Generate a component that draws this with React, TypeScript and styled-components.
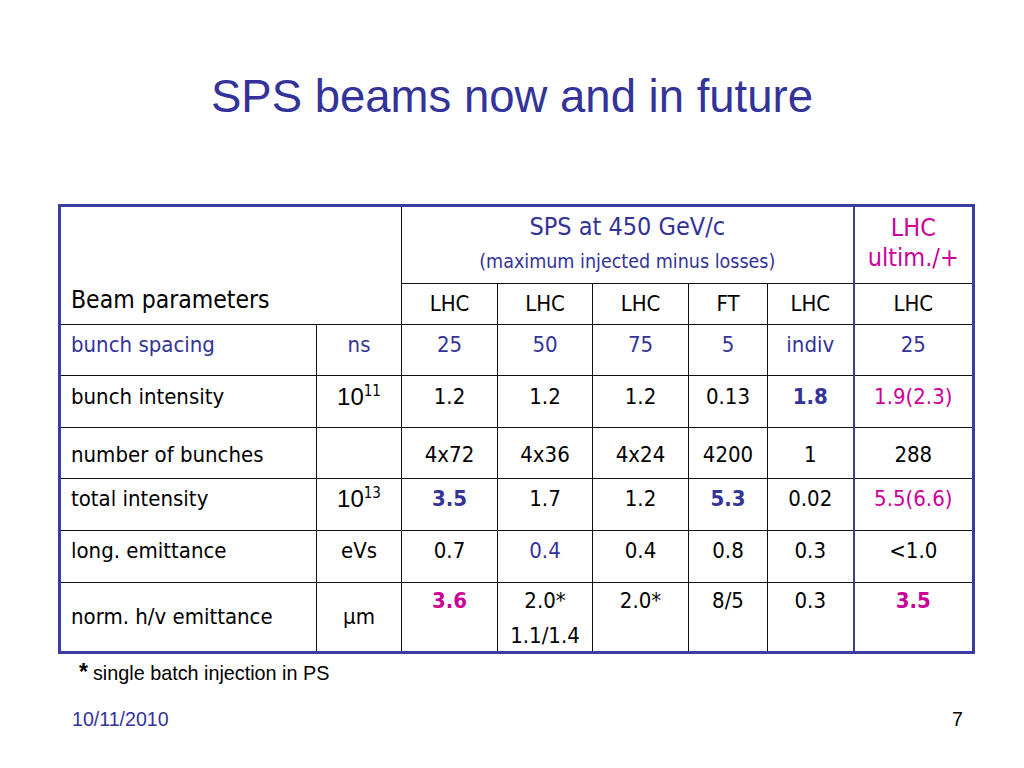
import React from "react";
import styled, { createGlobalStyle } from "styled-components";

const BLUE = "#333399";
const MAGENTA = "#cc0099";
const CELL_FONT = `"DejaVu Sans Condensed", "DejaVu Sans", sans-serif`;
const ARIAL = `"Liberation Sans", Arial, sans-serif`;

const Global = createGlobalStyle`
  html, body { margin: 0; padding: 0; background: #fff; }
  #root { width: 1024px; height: 768px; }
`;

const Slide = styled.div`
  width: 1024px;
  height: 768px;
  display: flex;
  flex-direction: column;
  box-sizing: border-box;
  overflow: hidden;
`;

const Title = styled.h1`
  margin: 0;
  height: 194px;
  padding-top: 71px;
  box-sizing: border-box;
  text-align: center;
  font-family: ${ARIAL};
  font-weight: normal;
  font-size: 45.5px;
  line-height: 52px;
  color: ${BLUE};
`;

const TableWrap = styled.div`
  padding: 0 0 0 58px;
  margin-top: 10px;
`;

const Table = styled.table`
  border-collapse: collapse;
  table-layout: fixed;
  width: 915px;
  border: 3px solid #3b3ba0;
  font-family: ${CELL_FONT};
  font-size: 22px;
  color: #000;
`;

const Row = styled.tr<{ $h: number }>`
  height: ${(p) => p.$h}px;
`;

const Cell = styled.td<{
  $align?: "left" | "center";
  $valign?: "top" | "middle" | "bottom";
  $color?: string;
  $bold?: boolean;
  $blueRight?: boolean;
  $pt?: number;
}>`
  border: 1px solid #111;
  ${(p) => (p.$blueRight ? `border-right: 2px solid #3b3ba0;` : "")}
  padding: ${(p) => (p.$pt ?? 7)}px 2px 0 ${(p) => (p.$align === "left" ? 10 : 2)}px;
  text-align: ${(p) => p.$align ?? "center"};
  vertical-align: ${(p) => p.$valign ?? "top"};
  color: ${(p) => p.$color ?? "#000"};
  font-weight: ${(p) => (p.$bold ? "bold" : "normal")};
  line-height: 26px;
  white-space: nowrap;
`;

const CornerCell = styled.td`
  border: 1px solid #111;
  vertical-align: bottom;
  padding: 0 0 9px 10px;
  font-size: 24.5px;
  line-height: 30px;
  text-align: left;
`;

const SpsHead = styled.td`
  border: 1px solid #111;
  vertical-align: top;
  text-align: center;
  color: ${BLUE};
  padding-top: 5px;
`;

const SpsMain = styled.div`
  font-size: 25px;
  line-height: 30px;
`;

const SpsSub = styled.div`
  font-size: 19.5px;
  line-height: 24px;
  margin-top: 8px;
`;

const UltHead = styled.td`
  border: 1px solid #111;
  border-left: 2px solid #3b3ba0;
  vertical-align: top;
  text-align: center;
  color: ${MAGENTA};
  font-size: 25px;
  line-height: 30px;
  padding-top: 6px;
`;

const Pow = styled.span`
  font-family: ${ARIAL};
  font-size: 24px;
`;

const Sup = styled.sup`
  font-family: ${CELL_FONT};
  font-size: 15px;
  vertical-align: 9px;
  line-height: 0;
`;

const Note = styled.div`
  margin: 6px 0 0 79px;
  font-family: ${ARIAL};
  font-size: 19.8px;
  line-height: 24px;
  color: #000;
`;

const Star = styled.span`
  font-size: 23px;
  font-weight: bold;
  margin-right: 5px;
`;

const Footer = styled.div`
  display: flex;
  justify-content: space-between;
  align-items: center;
  margin: 23px 0 0 0;
  padding: 0 56px 0 72px;
  font-family: ${ARIAL};
  font-size: 19.6px;
  line-height: 22px;
`;

const DateText = styled.span`
  color: ${BLUE};
`;

const PageNo = styled.span`
  color: #000;
  margin-right: 5px;
`;

const SecondLine = styled.span`
  display: block;
  margin-top: 9px;
`;

type V = { t: React.ReactNode; c?: string; b?: boolean };

const Power = ({ e }: { e: string }) => (
  <>
    <Pow>10</Pow>
    <Sup>{e}</Sup>
  </>
);

const rows: {
  name: string;
  nameColor?: string;
  unit: React.ReactNode;
  unitColor?: string;
  h: number;
  middleLabels?: boolean;
  vals: V[];
  valign?: "top" | "middle";
  pt?: number;
}[] = [
  {
    name: "bunch spacing",
    nameColor: BLUE,
    unit: "ns",
    unitColor: BLUE,
    h: 51,
    pt: 7,
    vals: [
      { t: "25", c: BLUE },
      { t: "50", c: BLUE },
      { t: "75", c: BLUE },
      { t: "5", c: BLUE },
      { t: "indiv", c: BLUE },
      { t: "25", c: BLUE },
    ],
  },
  {
    name: "bunch intensity",
    unit: <Power e="11" />,
    h: 52,
    pt: 8,
    vals: [
      { t: "1.2" },
      { t: "1.2" },
      { t: "1.2" },
      { t: "0.13" },
      { t: "1.8", c: BLUE, b: true },
      { t: "1.9(2.3)", c: MAGENTA },
    ],
  },
  {
    name: "number of bunches",
    unit: "",
    h: 51,
    valign: "middle",
    pt: 3,
    vals: [
      { t: "4x72" },
      { t: "4x36" },
      { t: "4x24" },
      { t: "4200" },
      { t: "1" },
      { t: "288" },
    ],
  },
  {
    name: "total intensity",
    unit: <Power e="13" />,
    h: 52,
    pt: 7,
    vals: [
      { t: "3.5", c: BLUE, b: true },
      { t: "1.7" },
      { t: "1.2" },
      { t: "5.3", c: BLUE, b: true },
      { t: "0.02" },
      { t: "5.5(6.6)", c: MAGENTA },
    ],
  },
  {
    name: "long. emittance",
    unit: "eVs",
    h: 52,
    pt: 7,
    vals: [
      { t: "0.7" },
      { t: "0.4", c: BLUE },
      { t: "0.4" },
      { t: "0.8" },
      { t: "0.3" },
      { t: "<1.0" },
    ],
  },
  {
    name: "norm. h/v emittance",
    unit: "µm",
    h: 70,
    middleLabels: true,
    pt: 5,
    vals: [
      { t: "3.6", c: MAGENTA, b: true },
      {
        t: (
          <>
            2.0*
            <SecondLine>1.1/1.4</SecondLine>
          </>
        ),
      },
      { t: "2.0*" },
      { t: "8/5" },
      { t: "0.3" },
      { t: "3.5", c: MAGENTA, b: true },
    ],
  },
];

const colWidths = [257, 85, 96, 95, 96, 79, 86, 120];

export default function App() {
  return (
    <Slide>
      <Global />
      <Title>SPS beams now and in future</Title>
      <TableWrap>
        <Table>
          <colgroup>
            {colWidths.map((w, i) => (
              <col key={i} style={{ width: w }} />
            ))}
          </colgroup>
          <tbody>
            <Row $h={78}>
              <CornerCell colSpan={2} rowSpan={2}>
                Beam parameters
              </CornerCell>
              <SpsHead colSpan={5}>
                <SpsMain>SPS at 450 GeV/c</SpsMain>
                <SpsSub>(maximum injected minus losses)</SpsSub>
              </SpsHead>
              <UltHead>
                LHC
                <br />
                ultim./+
              </UltHead>
            </Row>
            <Row $h={41}>
              {["LHC", "LHC", "LHC", "FT", "LHC"].map((t, i) => (
                <Cell key={i} $pt={7} $blueRight={i === 4}>
                  {t}
                </Cell>
              ))}
              <Cell $pt={7}>LHC</Cell>
            </Row>
            {rows.map((r) => (
              <Row key={r.name} $h={r.h}>
                <Cell
                  $align="left"
                  $color={r.nameColor}
                  $valign={r.middleLabels ? "middle" : r.valign}
                  $pt={r.middleLabels ? 0 : r.pt}
                >
                  {r.name}
                </Cell>
                <Cell
                  $color={r.unitColor}
                  $valign={r.middleLabels ? "middle" : r.valign}
                  $pt={r.middleLabels ? 0 : r.pt}
                >
                  {r.unit}
                </Cell>
                {r.vals.map((v, i) => (
                  <Cell
                    key={i}
                    $color={v.c}
                    $bold={v.b}
                    $valign={r.valign}
                    $pt={r.pt}
                    $blueRight={i === 4}
                  >
                    {v.t}
                  </Cell>
                ))}
              </Row>
            ))}
          </tbody>
        </Table>
      </TableWrap>
      <Note>
        <Star>*</Star>single batch injection in PS
      </Note>
      <Footer>
        <DateText>10/11/2010</DateText>
        <PageNo>7</PageNo>
      </Footer>
    </Slide>
  );
}
